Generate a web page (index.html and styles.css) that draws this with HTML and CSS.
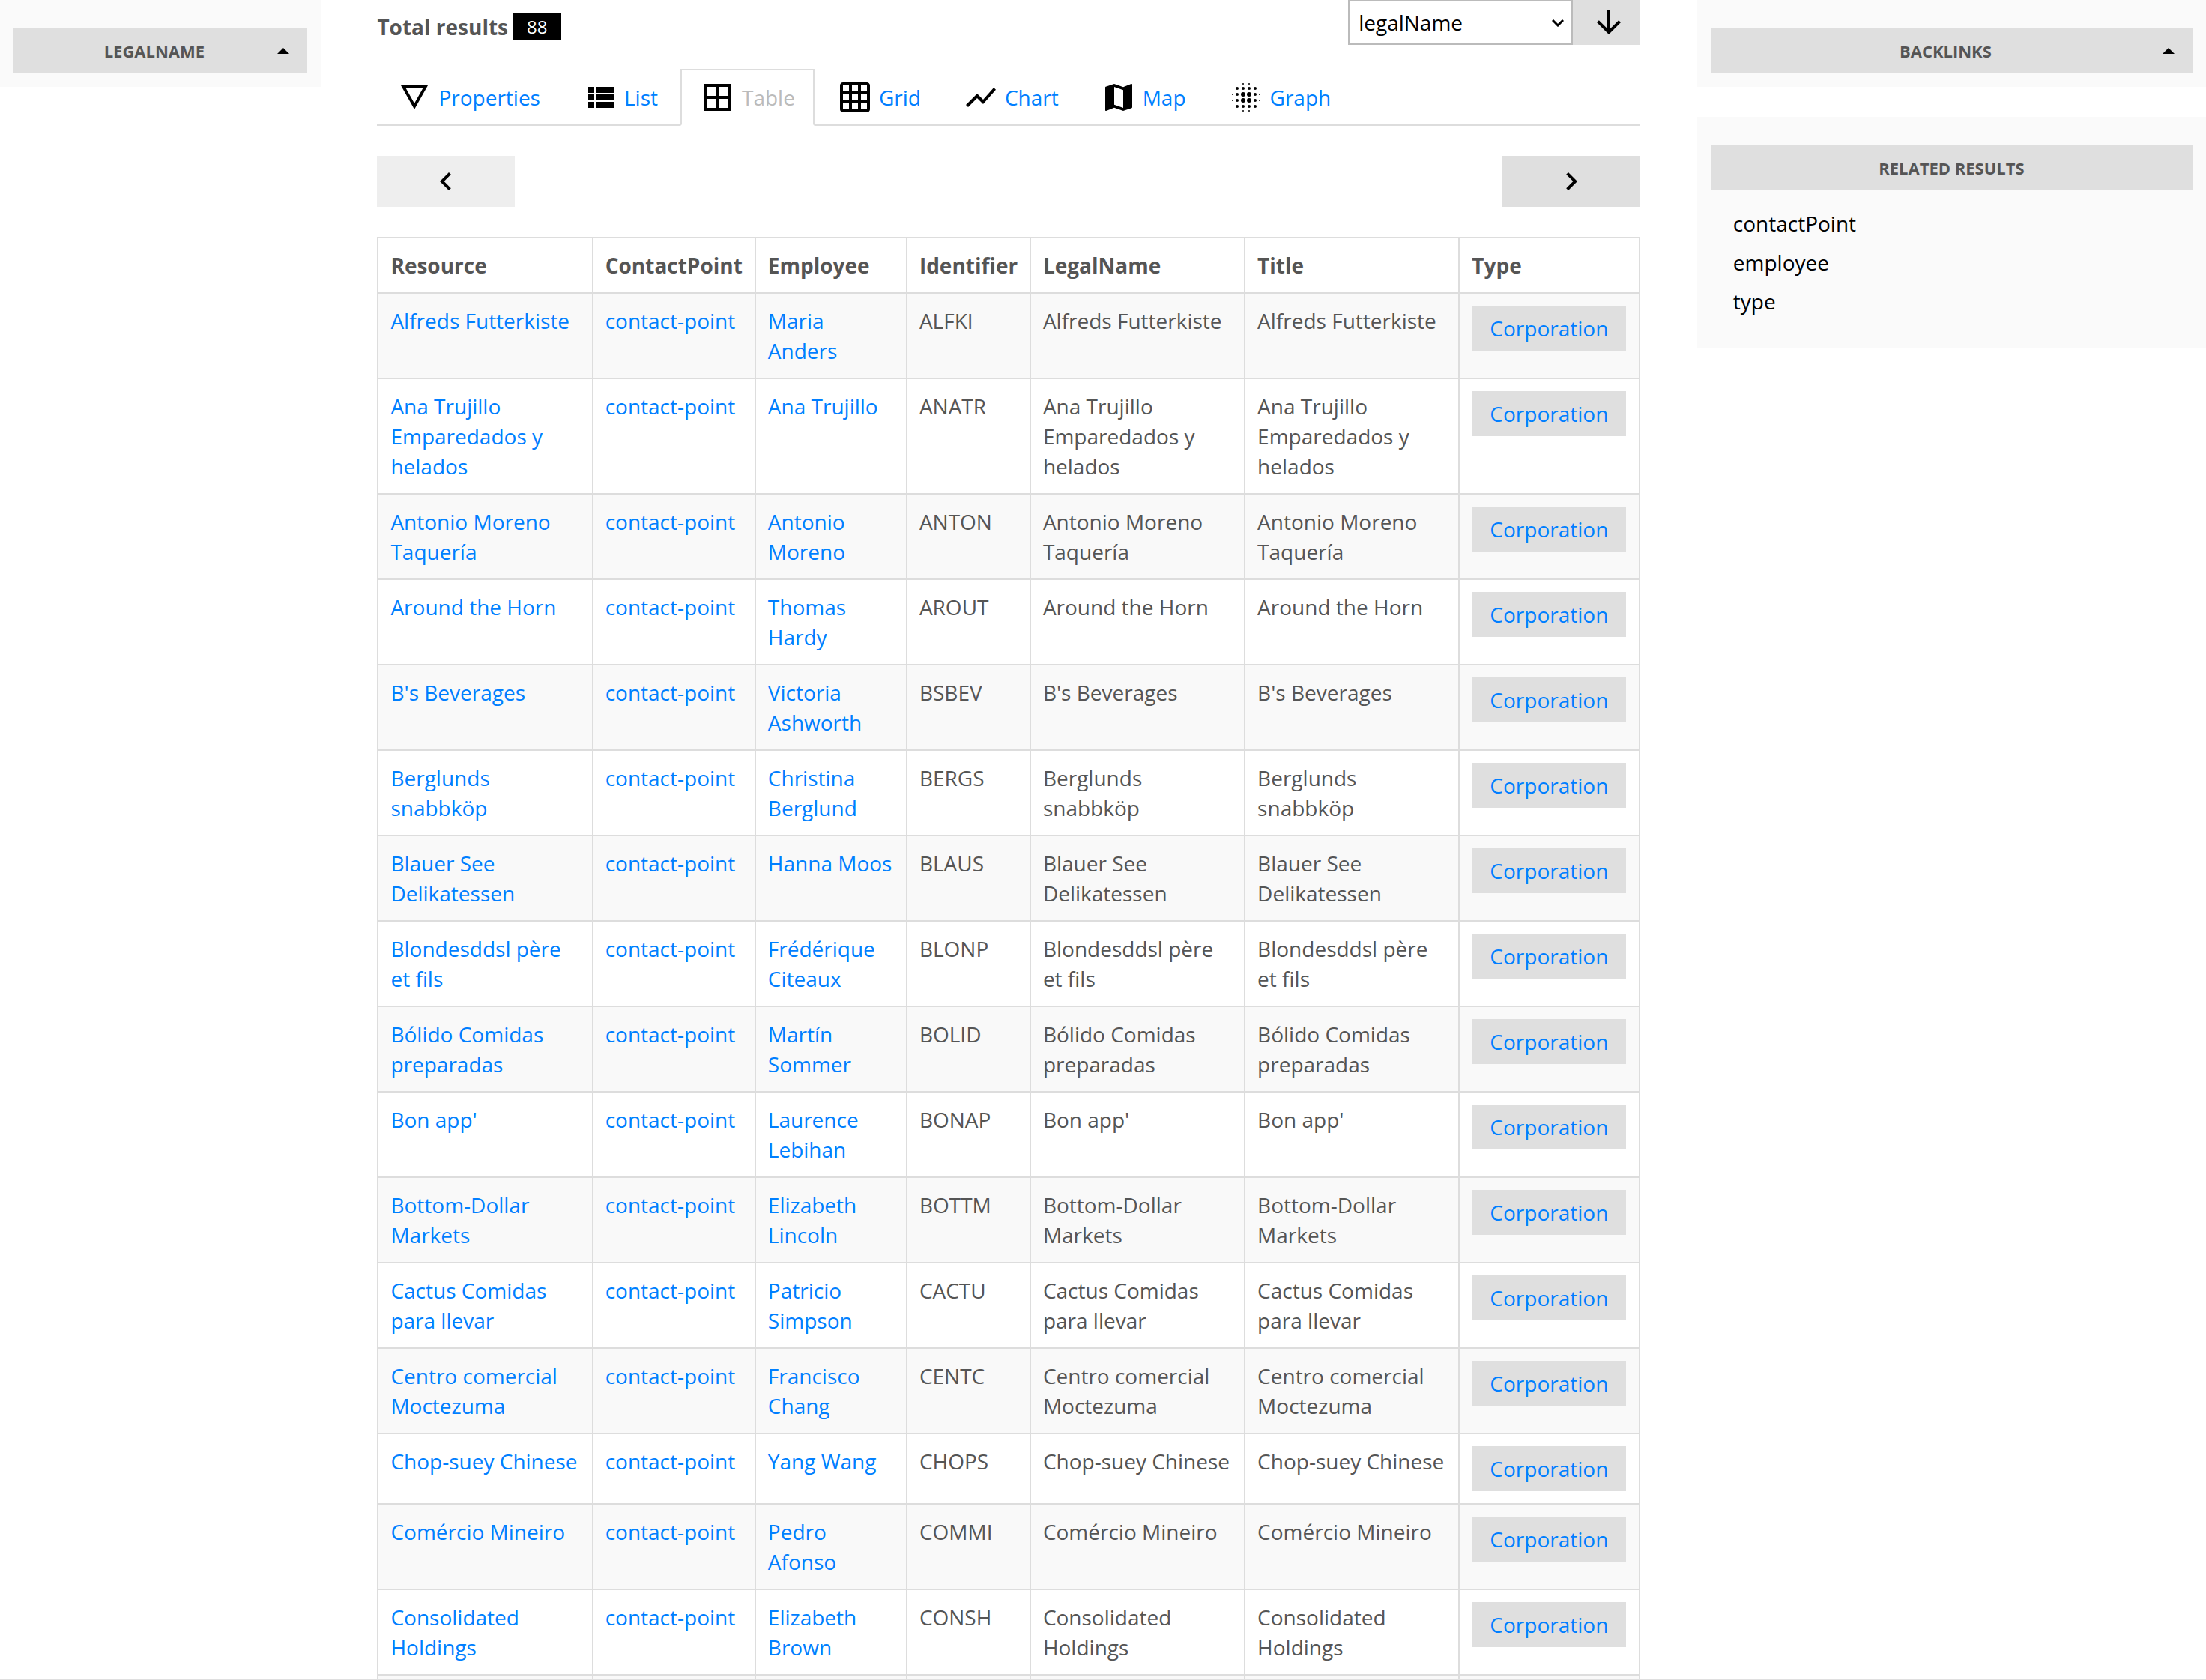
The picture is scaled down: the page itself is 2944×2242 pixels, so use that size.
FILE: index.html
```html
<!DOCTYPE html>
<html lang="en">
<head>
<meta charset="utf-8">
<title>Results</title>
<link rel="stylesheet" href="styles.css">
</head>
<body>
<div class="layout">
  <aside class="sidebar">
    <section class="panel">
      <button class="panel-title" type="button"><span class="panel-label">legalName</span><span class="caret"></span></button>
    </section>
  </aside>

  <main class="main">
    <div class="toolbar">
      <p class="total">Total results <span class="badge">88</span></p>
      <form class="order">
        <div class="select-wrap">
          <select class="select" aria-label="Order by"><option>legalName</option></select>
          <svg class="select-arrow" viewBox="0 0 16 10"><path d="M1 1l7 7 7-7" fill="none" stroke="#000" stroke-width="3"/></svg>
        </div>
        <button class="btn btn-order" type="button" aria-label="Descending"><svg class="icon" viewBox="0 0 24 24"><path d="M20 12l-1.41-1.41L13 16.17V4h-2v12.17l-5.58-5.59L4 12l8 8 8-8z"/></svg></button>
      </form>
    </div>

    <nav class="tabs">
      <a class="tab" href="#properties"><svg class="icon" viewBox="0 0 24 24"><path d="M3 4l9 16 9-16H3zm3.38 2h11.25L12 16 6.38 6z"/></svg>Properties</a>
      <a class="tab" href="#list"><svg class="icon" viewBox="0 0 24 24"><path d="M4 14h4v-4H4v4zm0 5h4v-4H4v4zM4 9h4V5H4v4zm5 5h12v-4H9v4zm0 5h12v-4H9v4zM9 5v4h12V5H9z"/></svg>List</a>
      <a class="tab tab-active" href="#table"><svg class="icon" viewBox="0 0 24 24"><path d="M3 3v18h18V3H3zm8 16H5v-6h6v6zm0-8H5V5h6v6zm8 8h-6v-6h6v6zm0-8h-6V5h6v6z"/></svg>Table</a>
      <a class="tab" href="#grid"><svg class="icon" viewBox="0 0 24 24"><path d="M20 2H4c-1.1 0-2 .9-2 2v16c0 1.1.9 2 2 2h16c1.1 0 2-.9 2-2V4c0-1.1-.9-2-2-2zM8 20H4v-4h4v4zm0-6H4v-4h4v4zm0-6H4V4h4v4zm6 12h-4v-4h4v4zm0-6h-4v-4h4v4zm0-6h-4V4h4v4zm6 12h-4v-4h4v4zm0-6h-4v-4h4v4zm0-6h-4V4h4v4z"/></svg>Grid</a>
      <a class="tab" href="#chart"><svg class="icon" viewBox="0 0 24 24"><path d="M3.5 18.49l6-6.01 4 4L22 6.92l-1.41-1.41-7.09 7.97-4-4L2 16.99z"/></svg>Chart</a>
      <a class="tab" href="#map"><svg class="icon" viewBox="0 0 24 24"><path d="M20.5 3l-.16.03L15 5.1 9 3 3.36 4.9c-.21.07-.36.25-.36.48V20.5c0 .28.22.5.5.5l.16-.03L9 18.9l6 2.1 5.64-1.9c.21-.07.36-.25.36-.48V3.5c0-.28-.22-.5-.5-.5zM15 19l-6-2.11V5l6 2.11V19z"/></svg>Map</a>
      <a class="tab" href="#graph"><svg class="icon" viewBox="0 0 24 24"><circle cx="6" cy="6" r="1"/><circle cx="10" cy="6" r="1"/><circle cx="14" cy="6" r="1"/><circle cx="18" cy="6" r="1"/><circle cx="6" cy="10" r="1"/><circle cx="18" cy="10" r="1"/><circle cx="6" cy="14" r="1"/><circle cx="18" cy="14" r="1"/><circle cx="6" cy="18" r="1"/><circle cx="10" cy="18" r="1"/><circle cx="14" cy="18" r="1"/><circle cx="18" cy="18" r="1"/><circle cx="10" cy="10" r="1.5"/><circle cx="14" cy="10" r="1.5"/><circle cx="10" cy="14" r="1.5"/><circle cx="14" cy="14" r="1.5"/><circle cx="10" cy="3" r=".5"/><circle cx="14" cy="3" r=".5"/><circle cx="10" cy="21" r=".5"/><circle cx="14" cy="21" r=".5"/><circle cx="3" cy="10" r=".5"/><circle cx="3" cy="14" r=".5"/><circle cx="21" cy="10" r=".5"/><circle cx="21" cy="14" r=".5"/></svg>Graph</a>
    </nav>

    <div class="pager">
      <button class="btn btn-page btn-off" type="button" aria-label="Previous" disabled><svg class="icon" viewBox="0 0 24 24"><path d="M15.41 7.41L14 6l-6 6 6 6 1.41-1.41L10.83 12z"/></svg></button>
      <button class="btn btn-page" type="button" aria-label="Next"><svg class="icon" viewBox="0 0 24 24"><path d="M10 6L8.59 7.41 13.17 12l-4.58 4.59L10 18l6-6z"/></svg></button>
    </div>

    <table class="results">
      <colgroup><col class="col-name"><col class="col-contact"><col class="col-employee"><col class="col-id"><col class="col-name"><col class="col-name"><col></colgroup>
      <thead>
        <tr><th>Resource</th><th>ContactPoint</th><th>Employee</th><th>Identifier</th><th>LegalName</th><th>Title</th><th>Type</th></tr>
      </thead>
      <tbody>
        <tr><td><a href="#ALFKI">Alfreds Futterkiste</a></td><td><a href="#c">contact-point</a></td><td><a href="#e">Maria Anders</a></td><td>ALFKI</td><td>Alfreds Futterkiste</td><td>Alfreds Futterkiste</td><td><a class="type" href="#t">Corporation</a></td></tr>
        <tr><td><a href="#ANATR">Ana Trujillo Emparedados y helados</a></td><td><a href="#c">contact-point</a></td><td><a href="#e">Ana Trujillo</a></td><td>ANATR</td><td>Ana Trujillo Emparedados y helados</td><td>Ana Trujillo Emparedados y helados</td><td><a class="type" href="#t">Corporation</a></td></tr>
        <tr><td><a href="#ANTON">Antonio Moreno Taquería</a></td><td><a href="#c">contact-point</a></td><td><a href="#e">Antonio Moreno</a></td><td>ANTON</td><td>Antonio Moreno Taquería</td><td>Antonio Moreno Taquería</td><td><a class="type" href="#t">Corporation</a></td></tr>
        <tr><td><a href="#AROUT">Around the Horn</a></td><td><a href="#c">contact-point</a></td><td><a href="#e">Thomas Hardy</a></td><td>AROUT</td><td>Around the Horn</td><td>Around the Horn</td><td><a class="type" href="#t">Corporation</a></td></tr>
        <tr><td><a href="#BSBEV">B's Beverages</a></td><td><a href="#c">contact-point</a></td><td><a href="#e">Victoria Ashworth</a></td><td>BSBEV</td><td>B's Beverages</td><td>B's Beverages</td><td><a class="type" href="#t">Corporation</a></td></tr>
        <tr><td><a href="#BERGS">Berglunds snabbköp</a></td><td><a href="#c">contact-point</a></td><td><a href="#e">Christina Berglund</a></td><td>BERGS</td><td>Berglunds snabbköp</td><td>Berglunds snabbköp</td><td><a class="type" href="#t">Corporation</a></td></tr>
        <tr><td><a href="#BLAUS">Blauer See Delikatessen</a></td><td><a href="#c">contact-point</a></td><td><a href="#e">Hanna Moos</a></td><td>BLAUS</td><td>Blauer See Delikatessen</td><td>Blauer See Delikatessen</td><td><a class="type" href="#t">Corporation</a></td></tr>
        <tr><td><a href="#BLONP">Blondesddsl père et fils</a></td><td><a href="#c">contact-point</a></td><td><a href="#e">Frédérique Citeaux</a></td><td>BLONP</td><td>Blondesddsl père et fils</td><td>Blondesddsl père et fils</td><td><a class="type" href="#t">Corporation</a></td></tr>
        <tr><td><a href="#BOLID">Bólido Comidas preparadas</a></td><td><a href="#c">contact-point</a></td><td><a href="#e">Martín Sommer</a></td><td>BOLID</td><td>Bólido Comidas preparadas</td><td>Bólido Comidas preparadas</td><td><a class="type" href="#t">Corporation</a></td></tr>
        <tr><td><a href="#BONAP">Bon app'</a></td><td><a href="#c">contact-point</a></td><td><a href="#e">Laurence Lebihan</a></td><td>BONAP</td><td>Bon app'</td><td>Bon app'</td><td><a class="type" href="#t">Corporation</a></td></tr>
        <tr><td><a href="#BOTTM">Bottom-Dollar Markets</a></td><td><a href="#c">contact-point</a></td><td><a href="#e">Elizabeth Lincoln</a></td><td>BOTTM</td><td>Bottom-Dollar Markets</td><td>Bottom-Dollar Markets</td><td><a class="type" href="#t">Corporation</a></td></tr>
        <tr><td><a href="#CACTU">Cactus Comidas para llevar</a></td><td><a href="#c">contact-point</a></td><td><a href="#e">Patricio Simpson</a></td><td>CACTU</td><td>Cactus Comidas para llevar</td><td>Cactus Comidas para llevar</td><td><a class="type" href="#t">Corporation</a></td></tr>
        <tr><td><a href="#CENTC">Centro comercial Moctezuma</a></td><td><a href="#c">contact-point</a></td><td><a href="#e">Francisco Chang</a></td><td>CENTC</td><td>Centro comercial Moctezuma</td><td>Centro comercial Moctezuma</td><td><a class="type" href="#t">Corporation</a></td></tr>
        <tr><td><a href="#CHOPS">Chop-suey Chinese</a></td><td><a href="#c">contact-point</a></td><td><a href="#e">Yang Wang</a></td><td>CHOPS</td><td>Chop-suey Chinese</td><td>Chop-suey Chinese</td><td><a class="type" href="#t">Corporation</a></td></tr>
        <tr><td><a href="#COMMI">Comércio Mineiro</a></td><td><a href="#c">contact-point</a></td><td><a href="#e">Pedro Afonso</a></td><td>COMMI</td><td>Comércio Mineiro</td><td>Comércio Mineiro</td><td><a class="type" href="#t">Corporation</a></td></tr>
        <tr><td><a href="#CONSH">Consolidated Holdings</a></td><td><a href="#c">contact-point</a></td><td><a href="#e">Elizabeth Brown</a></td><td>CONSH</td><td>Consolidated Holdings</td><td>Consolidated Holdings</td><td><a class="type" href="#t">Corporation</a></td></tr>
        <tr><td></td><td></td><td></td><td></td><td></td><td></td><td></td></tr>
      </tbody>
    </table>
  </main>

  <aside class="sidebar">
    <section class="panel">
      <button class="panel-title" type="button"><span class="panel-label">Backlinks</span><span class="caret"></span></button>
    </section>
    <section class="panel">
      <h2 class="panel-title"><span class="panel-label">Related results</span></h2>
      <ul class="related">
        <li><a href="#contactPoint">contactPoint</a></li>
        <li><a href="#employee">employee</a></li>
        <li><a href="#type">type</a></li>
      </ul>
    </section>
  </aside>
</div>
<footer class="footer"></footer>
</body>
</html>
```
FILE: styles.css
```css
* {
  box-sizing: border-box;
}

body {
  display: flex;
  flex-direction: column;
  height: 100vh;
  margin: 0;
  overflow: hidden;
  background: #fff;
  color: #555;
  font: 28px/40px "Open Sans", "Noto Sans", sans-serif;
}

a {
  color: #007fff;
  text-decoration: none;
}

button,
select {
  margin: 0;
  border: 0;
  border-radius: 0;
  font: inherit;
}

.layout {
  display: grid;
  grid-template-columns: 14.53% 57.26% 1fr;
  column-gap: 2.57%;
  flex: 1;
  min-height: 0;
  overflow: hidden;
}

.footer {
  flex: none;
  border-top: 2px solid #dfdfdf;
}

.main {
  min-width: 0;
}

/* Side panels */

.sidebar {
  display: flex;
  flex-direction: column;
  gap: 40px;
}

.panel {
  padding: 38px 18px 18px;
  background: #fafafa;
}

.panel-title {
  display: flex;
  align-items: center;
  width: 100%;
  height: 60px;
  margin: 0;
  padding: 0 24px;
  background: #dfdfdf;
  color: #555;
  font-size: 22px;
  font-weight: 700;
  text-transform: uppercase;
}

.panel-label {
  flex: 1;
  text-align: center;
}

.caret {
  border: 8px solid transparent;
  border-top: 0;
  border-bottom-color: #000;
}

.related {
  margin: 0;
  padding: 18px 0 18px 30px;
  list-style: none;
}

.related li {
  padding: 6px 0;
}

.related a {
  color: #000;
}

/* Result count and ordering */

.toolbar {
  display: flex;
  justify-content: space-between;
  margin-bottom: 32px;
}

.total {
  display: flex;
  align-items: center;
  gap: 7px;
  height: 40px;
  margin: 16px 0 0;
  font-weight: 700;
}

.badge {
  padding: 4px 18px;
  background: #000;
  color: #fff;
  font-size: 24px;
  font-weight: 400;
  line-height: 28px;
}

.order {
  display: flex;
}

.select-wrap {
  position: relative;
}

.select {
  display: block;
  width: 300px;
  height: 60px;
  padding: 0 40px 0 12px;
  border: 2px solid #bbb;
  background: #fff;
  color: #000;
  appearance: none;
}

.select-arrow {
  position: absolute;
  top: 26px;
  right: 12px;
  width: 16px;
  height: 10px;
  pointer-events: none;
}

.btn {
  display: flex;
  align-items: center;
  justify-content: center;
  padding: 0;
  background: #dfdfdf;
}

.btn-order {
  width: 90px;
  height: 60px;
  padding-left: 6px;
}

.icon {
  flex: none;
  width: 48px;
  height: 48px;
  margin: -4px 0;
  fill: #000;
}

/* View tabs */

.tabs {
  display: flex;
  gap: 4px;
  border-bottom: 2px solid #ddd;
}

.tab {
  display: flex;
  align-items: center;
  gap: 8px;
  margin-bottom: -2px;
  padding: 16px 24px;
  border: 2px solid transparent;
}

.tab-active {
  border-color: #ddd #ddd #fff;
  background: #fff;
  color: #bbb;
}

.pager {
  display: flex;
  justify-content: space-between;
  margin: 40px 0;
}

.btn-page {
  width: 184px;
  height: 68px;
}

.btn-off {
  background: #eee;
}

/* Results table */

.results {
  width: 100%;
  border: 2px solid #ddd;
  border-width: 0 2px 0 0;
  border-spacing: 0;
  table-layout: fixed;
}

.col-name {
  width: 17%;
}

.col-contact {
  width: 12.9%;
}

.col-employee {
  width: 12%;
}

.col-id {
  width: 9.8%;
}

.results th,
.results td {
  padding: 16px;
  border-top: 2px solid #ddd;
  border-left: 2px solid #ddd;
  text-align: left;
  vertical-align: top;
}

.results tbody tr:nth-child(odd) {
  background: #f9f9f9;
}

.type {
  display: block;
  width: max-content;
  padding: 10px 24px;
  background: #dfdfdf;
}
```
